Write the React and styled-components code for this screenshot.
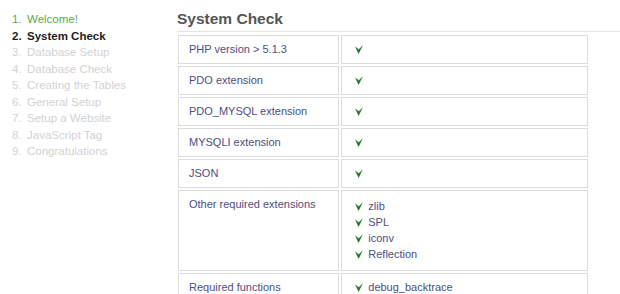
import React from 'react'
import styled, { createGlobalStyle } from 'styled-components'

const GlobalStyle = createGlobalStyle`
  body {
    margin: 0;
    background: #fff;
    font-family: "Liberation Sans", Arial, sans-serif;
  }
`

const steps = [
  'Welcome!',
  'System Check',
  'Database Setup',
  'Database Check',
  'Creating the Tables',
  'General Setup',
  'Setup a Website',
  'JavaScript Tag',
  'Congratulations',
]

const checks = [
  { label: 'PHP version > 5.1.3', items: [''] },
  { label: 'PDO extension', items: [''] },
  { label: 'PDO_MYSQL extension', items: [''] },
  { label: 'MYSQLI extension', items: [''] },
  { label: 'JSON', items: [''] },
  { label: 'Other required extensions', items: ['zlib', 'SPL', 'iconv', 'Reflection'] },
  { label: 'Required functions', items: ['debug_backtrace'] },
]

const Page = styled.div`
  display: flex;
  width: 620px;
  height: 294px;
  overflow: hidden;
`

const Sidebar = styled.ol`
  list-style: none;
  margin: 0;
  padding: 11px 0 0 12px;
  width: 164px;
  flex-shrink: 0;
`

const Step = styled.li`
  display: flex;
  font-size: 11.5px;
  line-height: 16.5px;
  color: ${p => (p.$state === 'done' ? '#5aab4c' : p.$state === 'current' ? '#1e1e1e' : '#d2d2d2')};
  font-weight: ${p => (p.$state === 'current' ? 'bold' : 'normal')};
`

const StepNum = styled.span`
  width: 15px;
  flex-shrink: 0;
`

const Main = styled.div`
  flex: 1;
`

const Title = styled.h2`
  margin: 0 0 1px 1px;
  padding: 11px 0 4px;
  font-size: 15.5px;
  font-weight: bold;
  color: #555;
  border-bottom: 1px solid #e4e4e4;
  line-height: 16px;
`

const Table = styled.table`
  border-collapse: separate;
  border-spacing: 2px;
  width: 414px;
  font-size: 11px;
  color: #4e4e80;
`

const Cell = styled.td`
  border: 1px solid #dcdcdc;
  padding: 5px 10px 6px;
  line-height: 16px;
  vertical-align: top;
  width: ${p => p.$w}px;
`

const CheckList = styled.ul`
  list-style: none;
  margin: ${p => (p.$multi ? '2px 0' : '0')};
  padding: 0 0 0 3px;
`

const CheckItem = styled.li`
  display: flex;
  align-items: center;
  gap: 5px;
  height: 16px;
`

const Tick = () => (
  <svg width="8" height="9" viewBox="0 0 8 9">
    <path d="M0 1.5 L3.6 9 L8 0 L3.8 4.2 Z" fill="#2a7a2e" />
  </svg>
)

export default function App() {
  return (
    <>
      <GlobalStyle />
      <Page>
        <Sidebar>
          {steps.map((s, i) => (
            <Step key={s} $state={i === 0 ? 'done' : i === 1 ? 'current' : 'todo'}>
              <StepNum>{i + 1}.</StepNum>
              {s}
            </Step>
          ))}
        </Sidebar>
        <Main>
          <Title>System Check</Title>
          <Table>
            <tbody>
              {checks.map(c => (
                <tr key={c.label}>
                  <Cell $w={140}>{c.label}</Cell>
                  <Cell $w={226}>
                    <CheckList $multi={c.items.length > 1}>
                      {c.items.map(item => (
                        <CheckItem key={item}>
                          <Tick />
                          {item}
                        </CheckItem>
                      ))}
                    </CheckList>
                  </Cell>
                </tr>
              ))}
            </tbody>
          </Table>
        </Main>
      </Page>
    </>
  )
}
